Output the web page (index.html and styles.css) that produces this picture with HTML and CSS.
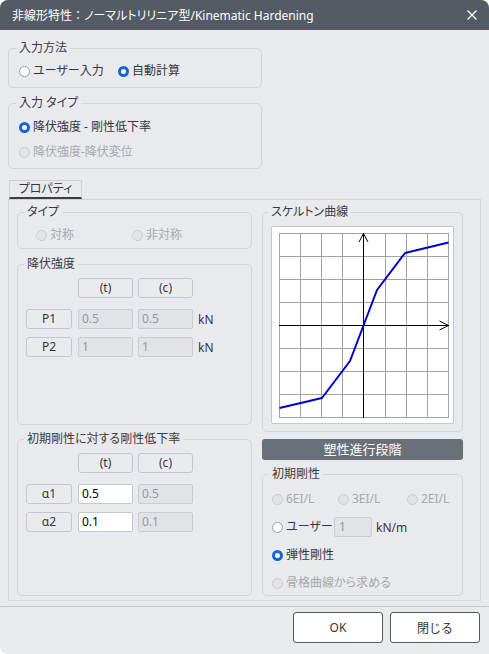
FILE: index.html
```html
<!DOCTYPE html>
<html lang="ja">
<head>
    <meta charset="UTF-8">
    <meta name="viewport" content="width=device-width, initial-scale=1.0">
    <title>非線形特性</title>
<link rel="stylesheet" href="styles.css">
</head>
<body>

<div class="window">
  <div class="titlebar">
    <span class="title">非線形特性<span class="colon">：</span>ノーマルトリリニア型/Kinematic Hardening</span>
    <svg class="close" width="10" height="10" viewBox="0 0 10 10">
      <path d="M0.5 0.5 L9.5 9.5 M9.5 0.5 L0.5 9.5" stroke="#fff" stroke-width="1.3" fill="none"/>
    </svg>
  </div>

  <div class="content">
    <fieldset class="group g-method">
      <legend>入力方法</legend>
      <div class="inner">
        <div class="row">
          <label class="radio w99"><span class="dot"></span>ユーザー入力</label>
          <label class="radio on"><span class="dot"></span>自動計算</label>
        </div>
      </div>
    </fieldset>

    <fieldset class="group g-type">
      <legend>入力 タイプ</legend>
      <div class="inner">
        <div class="row">
          <label class="radio on"><span class="dot"></span>降伏強度 - 剛性低下率</label>
        </div>
        <div class="row second">
          <label class="radio off"><span class="dot"></span>降伏強度-降伏変位</label>
        </div>
      </div>
    </fieldset>

    <div class="tabs">
      <span class="tab">プロパティ</span>
    </div>

    <div class="panel">
      <div class="col">
        <fieldset class="group g-sym">
          <legend>タイプ</legend>
          <div class="inner">
            <div class="row">
              <label class="radio off w96"><span class="dot"></span>対称</label>
              <label class="radio off"><span class="dot"></span>非対称</label>
            </div>
          </div>
        </fieldset>

        <fieldset class="group g-table g-yield">
          <legend>降伏強度</legend>
          <div class="inner">
            <div class="trow head">
              <span class="cell-blank"></span>
              <span class="btn col-t">(t)</span>
              <span class="btn col-c">(c)</span>
            </div>
            <div class="trow">
              <span class="btn name">P1</span>
              <span class="field dis">0.5</span>
              <span class="field dis">0.5</span>
              <span class="unit">kN</span>
            </div>
            <div class="trow last">
              <span class="btn name">P2</span>
              <span class="field dis">1</span>
              <span class="field dis">1</span>
              <span class="unit">kN</span>
            </div>
          </div>
        </fieldset>

        <fieldset class="group g-table g-ratio">
          <legend>初期剛性に対する剛性低下率</legend>
          <div class="inner">
            <div class="trow head">
              <span class="cell-blank"></span>
              <span class="btn col-t">(t)</span>
              <span class="btn col-c">(c)</span>
            </div>
            <div class="trow">
              <span class="btn name">α1</span>
              <span class="field">0.5</span>
              <span class="field dis">0.5</span>
            </div>
            <div class="trow last">
              <span class="btn name">α2</span>
              <span class="field">0.1</span>
              <span class="field dis">0.1</span>
            </div>
          </div>
        </fieldset>
      </div>

      <div class="col">
        <fieldset class="group g-curve">
          <legend>スケルトン曲線</legend>
          <div class="inner">
            <div class="chart">
              <svg width="170" height="185" viewBox="0 0 170 185">
                <g stroke="#a3a3a3" stroke-width="1" fill="none">
                  <path d="M0.5 0 V185 M21.5 0 V185 M42.5 0 V185 M63.5 0 V185 M106.5 0 V185 M127.5 0 V185 M148.5 0 V185 M169.5 0 V185"/>
                  <path d="M0 0.5 H170 M0 23.5 H170 M0 46.5 H170 M0 69.5 H170 M0 115.5 H170 M0 138.5 H170 M0 161.5 H170 M0 184.5 H170"/>
                </g>
                <!-- axes -->
                <g stroke="#000" stroke-width="1" fill="none">
                  <path d="M84.5 0 V185 M0 92.5 H170"/>
                  <path d="M80 9 L84.5 0.5 L89 9"/>
                  <path d="M160.5 88 L169.5 92.5 L160.5 97"/>
                </g>
                <polyline points="0.5,175 43,165 71,128 84.5,92.5 98,57 126,20 169.5,9.5"
                          stroke="#0000c8" stroke-width="2" fill="none" stroke-linejoin="round"/>
              </svg>
            </div>
          </div>
        </fieldset>

        <div class="bar">塑性進行段階</div>

        <fieldset class="group g-stiff">
          <legend>初期剛性</legend>
          <div class="inner">
            <div class="srow">
              <label class="radio off w66"><span class="dot"></span>6EI/L</label>
              <label class="radio off w69"><span class="dot"></span>3EI/L</label>
              <label class="radio off"><span class="dot"></span>2EI/L</label>
            </div>
            <div class="srow">
              <label class="radio w62"><span class="dot"></span>ユーザー</label>
              <span class="field dis small">1</span>
              <span class="unit">kN/m</span>
            </div>
            <div class="srow">
              <label class="radio on"><span class="dot"></span>弾性剛性</label>
            </div>
            <div class="srow">
              <label class="radio off"><span class="dot"></span>骨格曲線から求める</label>
            </div>
          </div>
        </fieldset>
      </div>
    </div>
  </div>

  <div class="footer">
    <button class="dlg-btn">OK</button>
    <button class="dlg-btn">閉じる</button>
  </div>
</div>

</body>
</html>
```

FILE: styles.css
```css
html {
  font-family: "Noto Sans", "Noto Sans CJK JP", sans-serif;
  font-feature-settings: "palt";
}

body {
  margin: 0;
  background-color: #ffffff;
}

.window {
  width: 489px;
  height: 654px;
  background-color: #e9eaee;
  border-radius: 8px 8px 0 8px;
  overflow: hidden;
  color: #35363a;
  font-size: 12px;
}

.titlebar {
  height: 30px;
  background-color: #545b64;
  display: flex;
  align-items: center;
  justify-content: space-between;
  padding: 0 12px 0 12px;
  box-sizing: border-box;
}

.title {
  color: #fff;
  font-size: 12px;
}

/* keep the full-width colon at its normal width */
.title .colon {
  font-feature-settings: normal;
}

/* group boxes */
.content {
  padding: 0 8px;
}

.group {
  margin: 0;
  padding: 0;
  min-width: 0;
  border: 1px solid #d3d5d9;
  border-radius: 5px;
}

.group legend {
  padding: 0 3px;
  margin-left: 7px;
  line-height: 16px;
  font-size: 12px;
  color: #3a3b3e;
}

.row {
  display: flex;
  align-items: center;
  height: 16px;
}

.radio {
  display: flex;
  align-items: center;
  line-height: 16px;
  white-space: nowrap;
}

.dot {
  width: 11px;
  height: 11px;
  box-sizing: border-box;
  border-radius: 50%;
  border: 1px solid #9a9da2;
  background: #fff;
  margin-right: 3px;
  flex: none;
}

.radio.on .dot {
  border: 3px solid #1565d8;
  background: #fff;
}

.radio.off {
  color: #a6a8ac;
}

.radio.off .dot {
  border-color: #c9cbcf;
  background: #e2e3e7;
}

.w99 { width: 99px; }
.w96 { width: 96px; }
.w66 { width: 66px; }
.w69 { width: 69px; }
.w62 { width: 62px; }

.g-method {
  width: 254px;
  box-sizing: border-box;
  margin-top: 10px;
}

.g-method .inner {
  padding: 7px 0 8px 10px;
}

.g-type {
  width: 254px;
  box-sizing: border-box;
  margin-top: 7px;
}

.g-type .inner {
  padding: 8px 0 8px 10px;
}

.g-type .second {
  margin-top: 9px;
}

/* tab strip */
.tabs {
  margin-top: 11px;
  display: flex;
  padding-left: 1px;
}

.tab {
  width: 73px;
  height: 19px;
  box-sizing: border-box;
  border: 1px solid #cfd1d5;
  border-bottom: 2px solid #3c3e42;
  text-align: center;
  line-height: 16px;
}

.panel {
  border: 1px solid #d3d5d9;
  border-top-color: #cfd1d5;
  padding: 4px 17px 4px 8px;
  display: grid;
  grid-template-columns: 235px 201px;
  column-gap: 10px;
}

.g-sym legend,
.g-table legend,
.g-stiff legend {
  margin-left: 6px;
}

.g-sym .inner {
  padding: 7px 0 5px 18px;
}

.g-table {
  margin-top: 7px;
}

.g-ratio {
  margin-top: 6px;
}

.g-table .inner {
  padding: 6px 0 0 8px;
}

.g-yield .inner {
  padding-bottom: 67px;
}

.g-ratio .inner {
  padding-bottom: 63px;
}

.trow {
  display: flex;
  align-items: center;
  gap: 5px;
  height: 20px;
  margin-bottom: 8px;
}

.trow.head {
  margin-bottom: 11px;
}

.trow.last {
  margin-bottom: 0;
}

.cell-blank {
  width: 46px;
  margin-right: 1px;
}

.btn {
  height: 20px;
  box-sizing: border-box;
  border: 1px solid #c4c7cc;
  border-radius: 3px;
  background: #eaebef;
  text-align: center;
  line-height: 18px;
}

.btn.name {
  width: 46px;
  margin-right: 1px;
}

.col-t,
.col-c {
  width: 55px;
}

.field {
  width: 55px;
  height: 20px;
  box-sizing: border-box;
  border: 1px solid #c4c7cc;
  border-radius: 2px;
  background: #fff;
  line-height: 18px;
  padding-left: 3px;
  color: #000;
}

.field.dis {
  background: #e1e3e7;
  border-color: #c9ccd1;
  color: #95989c;
}

.field.small {
  width: 38px;
  padding-left: 4px;
}

/* skeleton curve */
.g-curve legend {
  margin-left: 5px;
}

.g-curve .inner {
  padding: 6px 0 7px 8px;
}

.chart {
  width: 183px;
  height: 198px;
  box-sizing: border-box;
  border: 1px solid #c4c8ce;
  border-radius: 2px;
  background: #fff;
  padding: 6px 0 0 7px;
}

.chart svg {
  display: block;
}

.bar {
  margin-top: 7px;
  height: 21px;
  background: #6a7078;
  color: #fff;
  border-radius: 3px;
  text-align: center;
  line-height: 21px;
  font-size: 13px;
}

.g-stiff {
  margin-top: 6px;
}

.g-stiff .inner {
  padding: 7px 0 2px 9px;
}

.srow {
  display: flex;
  align-items: center;
  height: 20px;
  margin-bottom: 8px;
}

.srow:last-child {
  margin-bottom: 0;
}

.srow .unit {
  margin-left: 4px;
}

/* bottom buttons */
.footer {
  margin-top: 5px;
  border-top: 1px solid #c2c8d0;
  padding: 5px 9px 0 0;
  display: flex;
  justify-content: flex-end;
  gap: 7px;
}

.dlg-btn {
  width: 90px;
  height: 31px;
  border: 1px solid #55585e;
  border-radius: 3px;
  background: #fff;
  font-family: inherit;
  font-size: 12px;
  color: #35363a;
}
```
